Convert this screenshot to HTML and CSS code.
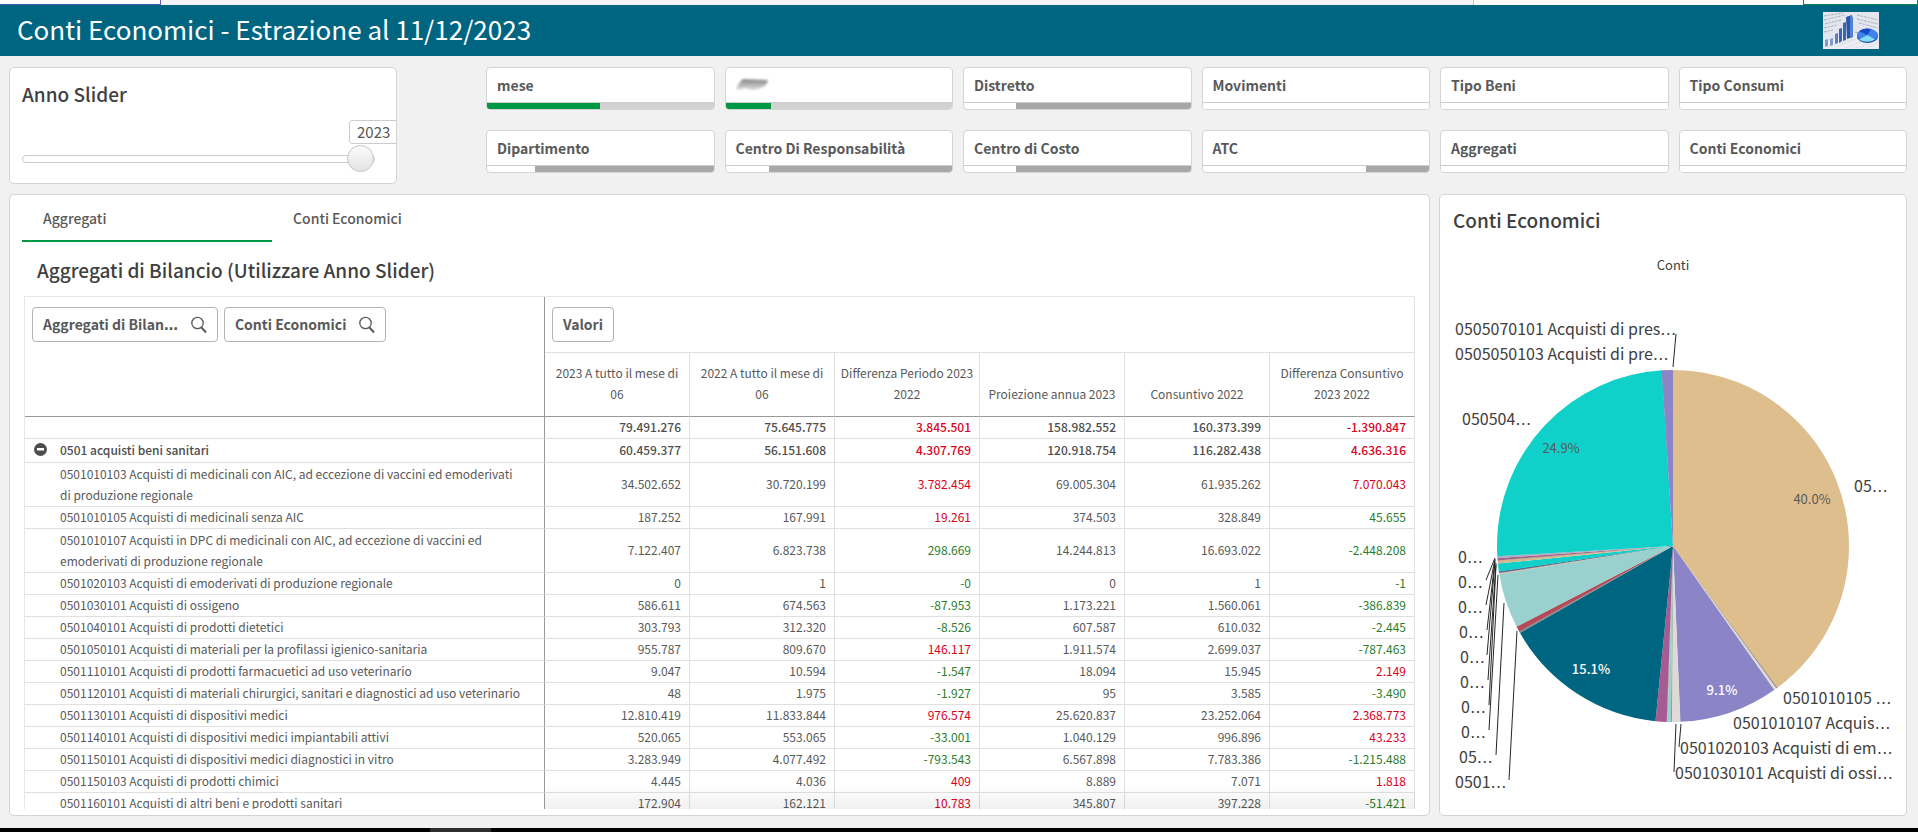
FILE: index.html
```
<!DOCTYPE html>
<html lang="it">
<head>
<meta charset="utf-8">
<title>Conti Economici</title>
<link rel="stylesheet" href="styles.css">
</head>
<body>
<div class="window-edge"><span class="edge-tab"></span><span class="edge-mid"></span><span class="edge-pane"></span><span class="edge-active"></span></div>
<header class="header">
  <h1 class="header-title">Conti Economici - Estrazione al 11/12/2023</h1>
  <svg class="header-picture" viewBox="0 0 56 37" aria-hidden="true">
    <rect width="56" height="37" fill="#e3e6ee"/>
    <g stroke="#a9afc0" stroke-width="1" stroke-dasharray="3 1 2 1" fill="none">
      <path d="M1 4L20 1M1 8L22 3M2 12L18 8M34 3L55 8M34 7L55 12M36 11L55 16M1 16L14 13M1 20L10 18M32 20L37 21"/>
      <path d="M14 35L36 26M22 36L40 29M32 36L46 32M4 36L30 27M46 35L55 31"/>
    </g>
    <path d="M0 30L34 22L56 30V37H0Z" fill="#f4f5f9" opacity=".6"/>
    <path d="M2 28l3-1v7l-3 1zM7 27l3-1v7l-3 1z" fill="#7f9bc9"/>
    <path d="M12 22l3-1v10l-3 1z" fill="#5b7fbd"/>
    <path d="M16 17l3-1v13l-3 2zM20 11l3-1v18l-3 1z" fill="#3c66b0"/>
    <path d="M23 5l6-2 1 22-6 2z" fill="#2b55a5"/>
    <path d="M27 4l3 1v20l-3 1z" fill="#4f83d8"/>
    <ellipse cx="44.500" cy="24.500" rx="10.500" ry="6.500" fill="#1f49a8"/>
    <ellipse cx="44.500" cy="23" rx="10.500" ry="6.500" fill="#3f82ec"/>
    <path d="M44.500 23L36 19.200A10.500 6.500 0 0 1 48 17Z" fill="#1648c8"/>
    <path d="M44.500 23L52 27.600A10.500 6.500 0 0 1 36 27.500Z" fill="#86dcf8"/>
  </svg>
</header>

<main class="sheet">
  <section class="controls">
    <div class="card slider-card">
      <label class="card-title" for="anno">Anno Slider</label>
      <output class="slider-value" for="anno">2023</output>
      <input class="slider" id="anno" type="range" min="2019" max="2023" value="2023">
    </div>
    <div class="filters">
      <button class="filter"><span class="filter-label">mese</span><span class="bar bar-rest"><span class="bar-selected" style="width:50%"></span></span></button>
      <button class="filter" aria-label="Filtro"><span class="filter-label"><svg class="smudge" viewBox="0 0 34 16" aria-hidden="true"><defs><linearGradient id="smudge" x1="0" y1="0" x2="0" y2="1"><stop offset="0" stop-color="#858585"/><stop offset="1" stop-color="#e0e0e0"/></linearGradient><filter id="soft"><feGaussianBlur stdDeviation="1"/></filter></defs><path d="M7 2L32 3Q31 9 25 11Q16 15 10 11Q4 13 0 13Q2 6 7 2Z" fill="url(#smudge)" filter="url(#soft)"/></svg></span><span class="bar bar-rest"><span class="bar-selected" style="width:20%"></span></span></button>
      <button class="filter"><span class="filter-label">Distretto</span><span class="bar bar-excluded"><span class="bar-possible" style="width:23%"></span></span></button>
      <button class="filter"><span class="filter-label">Movimenti</span><span class="bar"></span></button>
      <button class="filter"><span class="filter-label">Tipo Beni</span><span class="bar"></span></button>
      <button class="filter"><span class="filter-label">Tipo Consumi</span><span class="bar"></span></button>
      <button class="filter"><span class="filter-label">Dipartimento</span><span class="bar bar-excluded"><span class="bar-possible" style="width:21%"></span></span></button>
      <button class="filter"><span class="filter-label">Centro Di Responsabilità</span><span class="bar bar-excluded"><span class="bar-possible" style="width:19%"></span></span></button>
      <button class="filter"><span class="filter-label">Centro di Costo</span><span class="bar bar-excluded"><span class="bar-possible" style="width:23%"></span></span></button>
      <button class="filter"><span class="filter-label">ATC</span><span class="bar bar-excluded"><span class="bar-possible" style="width:72%"></span></span></button>
      <button class="filter"><span class="filter-label">Aggregati</span><span class="bar"></span></button>
      <button class="filter"><span class="filter-label">Conti Economici</span><span class="bar"></span></button>
    </div>
  </section>

  <section class="panels">
    <div class="card pivot-card">
      <nav class="tabs">
        <button class="tab tab-active">Aggregati</button>
        <button class="tab">Conti Economici</button>
      </nav>
      <h2 class="card-title pivot-title">Aggregati di Bilancio (Utilizzare Anno Slider)</h2>
      <div class="pivot-view">
        <table class="pivot">
          <colgroup><col class="col-name"><col><col><col><col><col><col></colgroup>
          <thead>
            <tr>
              <th class="dims" rowspan="2">
                <div class="chips">
                  <button class="chip"><span>Aggregati di Bilan<span class="dots">…</span></span><svg class="lens" viewBox="0 0 16 18" aria-hidden="true"><circle cx="6.500" cy="7" r="5.700"/><path d="M10.500 11.500L15 16.500" stroke-width="2"/></svg></button>
                  <button class="chip">Conti Economici<svg class="lens" viewBox="0 0 16 18" aria-hidden="true"><circle cx="6.500" cy="7" r="5.700"/><path d="M10.500 11.500L15 16.500" stroke-width="2"/></svg></button>
                </div>
              </th>
              <th class="measures" colspan="6"><div class="chips"><button class="chip">Valori</button></div></th>
            </tr>
            <tr class="heads"><th>2023 A tutto il mese di 06</th><th>2022 A tutto il mese di 06</th><th>Differenza Periodo 2023 2022</th><th>Proiezione annua 2023</th><th>Consuntivo 2022</th><th>Differenza Consuntivo 2023 2022</th></tr>
          </thead>
          <tbody>
            <tr class="total"><td></td><td>79.491.276</td><td>75.645.775</td><td class="up">3.845.501</td><td>158.982.552</td><td>160.373.399</td><td class="up">-1.390.847</td></tr>
            <tr class="total group"><td><div class="group-name"><button class="collapse" aria-label="Comprimi"><svg viewBox="0 0 13 13" aria-hidden="true"><circle cx="6.500" cy="6.500" r="6.500" fill="#4d4d4d"/><rect x="3" y="5" width="7" height="2.500" fill="#fff"/></svg></button>0501 acquisti beni sanitari</div></td><td>60.459.377</td><td>56.151.608</td><td class="up">4.307.769</td><td>120.918.754</td><td>116.282.438</td><td class="up">4.636.316</td></tr>
            <tr class="tall"><td>0501010103 Acquisti di medicinali con AIC, ad eccezione di vaccini ed emoderivati di produzione regionale</td><td>34.502.652</td><td>30.720.199</td><td class="up">3.782.454</td><td>69.005.304</td><td>61.935.262</td><td class="up">7.070.043</td></tr>
            <tr><td>0501010105 Acquisti di medicinali senza AIC</td><td>187.252</td><td>167.991</td><td class="up">19.261</td><td>374.503</td><td>328.849</td><td class="down">45.655</td></tr>
            <tr class="tall"><td>0501010107 Acquisti in DPC di medicinali con AIC, ad eccezione di vaccini ed emoderivati di produzione regionale</td><td>7.122.407</td><td>6.823.738</td><td class="down">298.669</td><td>14.244.813</td><td>16.693.022</td><td class="down">-2.448.208</td></tr>
            <tr><td>0501020103 Acquisti di emoderivati di produzione regionale</td><td>0</td><td>1</td><td class="down">-0</td><td>0</td><td>1</td><td class="down">-1</td></tr>
            <tr><td>0501030101 Acquisti di ossigeno</td><td>586.611</td><td>674.563</td><td class="down">-87.953</td><td>1.173.221</td><td>1.560.061</td><td class="down">-386.839</td></tr>
            <tr><td>0501040101 Acquisti di prodotti dietetici</td><td>303.793</td><td>312.320</td><td class="down">-8.526</td><td>607.587</td><td>610.032</td><td class="down">-2.445</td></tr>
            <tr><td>0501050101 Acquisti di materiali per la profilassi igienico-sanitaria</td><td>955.787</td><td>809.670</td><td class="up">146.117</td><td>1.911.574</td><td>2.699.037</td><td class="down">-787.463</td></tr>
            <tr><td>0501110101 Acquisti di prodotti farmacuetici ad uso veterinario</td><td>9.047</td><td>10.594</td><td class="down">-1.547</td><td>18.094</td><td>15.945</td><td class="up">2.149</td></tr>
            <tr><td>0501120101 Acquisti di materiali chirurgici, sanitari e diagnostici ad uso veterinario</td><td>48</td><td>1.975</td><td class="down">-1.927</td><td>95</td><td>3.585</td><td class="down">-3.490</td></tr>
            <tr><td>0501130101 Acquisti di dispositivi medici</td><td>12.810.419</td><td>11.833.844</td><td class="up">976.574</td><td>25.620.837</td><td>23.252.064</td><td class="up">2.368.773</td></tr>
            <tr><td>0501140101 Acquisti di dispositivi medici impiantabili attivi</td><td>520.065</td><td>553.065</td><td class="down">-33.001</td><td>1.040.129</td><td>996.896</td><td class="up">43.233</td></tr>
            <tr><td>0501150101 Acquisti di dispositivi medici diagnostici in vitro</td><td>3.283.949</td><td>4.077.492</td><td class="down">-793.543</td><td>6.567.898</td><td>7.783.386</td><td class="down">-1.215.488</td></tr>
            <tr><td>0501150103 Acquisti di prodotti chimici</td><td>4.445</td><td>4.036</td><td class="up">409</td><td>8.889</td><td>7.071</td><td class="up">1.818</td></tr>
            <tr><td>0501160101 Acquisti di altri beni e prodotti sanitari</td><td>172.904</td><td>162.121</td><td class="up">10.783</td><td>345.807</td><td>397.228</td><td class="down">-51.421</td></tr>
          </tbody>
        </table>
      </div>
    </div>

    <div class="card pie-card">
      <h2 class="card-title">Conti Economici</h2>
      <p class="legend-title">Conti</p>
      <svg class="pie" viewBox="0 0 466 530" role="img" aria-label="Conti Economici">
        <g transform="translate(233 261)">
          <g class="slices" transform="rotate(-90)">
            <circle r="88" pathLength="360" stroke="#dfbe8e" stroke-dasharray="143.7 360" stroke-dashoffset="0"/>
            <circle r="88" pathLength="360" stroke="#8e8f8c" stroke-dasharray=".5 360" stroke-dashoffset="-143.6"/>
            <circle r="88" pathLength="360" stroke="#e0dad8" stroke-dasharray="1 360" stroke-dashoffset="-144"/>
            <circle r="88" pathLength="360" stroke="#8b84c7" stroke-dasharray="32.700 360" stroke-dashoffset="-144.900"/>
            <circle r="88" pathLength="360" stroke="#e0dad6" stroke-dasharray="2.900 360" stroke-dashoffset="-177.500"/>
            <circle r="88" pathLength="360" stroke="#7f9e9e" stroke-dasharray=".5 360" stroke-dashoffset="-180.300"/>
            <circle r="88" pathLength="360" stroke="#9ad1cf" stroke-dasharray="1.200 360" stroke-dashoffset="-180.700"/>
            <circle r="88" pathLength="360" stroke="#c3ada6" stroke-dasharray=".4 360" stroke-dashoffset="-181.800"/>
            <circle r="88" pathLength="360" stroke="#a65c92" stroke-dasharray="3.700 360" stroke-dashoffset="-182.100"/>
            <circle r="88" pathLength="360" stroke="#006580" stroke-dasharray="54.600 360" stroke-dashoffset="-185.800"/>
            <circle r="88" pathLength="360" stroke="#8c8c92" stroke-dasharray=".7 360" stroke-dashoffset="-240.300"/>
            <circle r="88" pathLength="360" stroke="#b34a57" stroke-dasharray="1.800 360" stroke-dashoffset="-240.900"/>
            <circle r="88" pathLength="360" stroke="#9ad1cf" stroke-dasharray="18.200 360" stroke-dashoffset="-242.600"/>
            <circle r="88" pathLength="360" stroke="#d8c3a2" stroke-dasharray=".5 360" stroke-dashoffset="-260.700"/>
            <circle r="88" pathLength="360" stroke="#5c6b90" stroke-dasharray=".6 360" stroke-dashoffset="-261.100"/>
            <circle r="88" pathLength="360" stroke="#10d0ca" stroke-dasharray="2.600 360" stroke-dashoffset="-261.600"/>
            <circle r="88" pathLength="360" stroke="#d3b68e" stroke-dasharray="1.100 360" stroke-dashoffset="-264.200"/>
            <circle r="88" pathLength="360" stroke="#a0648f" stroke-dasharray=".8 360" stroke-dashoffset="-265.200"/>
            <circle r="88" pathLength="360" stroke="#b9adc4" stroke-dasharray=".8 360" stroke-dashoffset="-265.900"/>
            <circle r="88" pathLength="360" stroke="#10d0ca" stroke-dasharray="89.700 360" stroke-dashoffset="-266.600"/>
            <circle r="88" pathLength="360" stroke="#8b84c7" stroke-dasharray="3.800 360" stroke-dashoffset="-356.200"/>
          </g>
          <path class="leaders" d="M3-212L0-179M-187 34L-178 12M-187 59L-178 13M-186 84L-178 14M-186 109L-178 16M-185 134L-177 17M-184 159L-177 19M-184 184L-175 29M-177 209L-169 57M-164 234L-156 85M6 201L8 178M1 226L3 178"/>
          <g class="labels">
            <text x="-218" y="-211">0505070101 Acquisti di pres<tspan class="dots">…</tspan></text>
            <text x="-218" y="-186">0505050103 Acquisti di pre<tspan class="dots">…</tspan></text>
            <text x="-211" y="-121">050504<tspan class="dots">…</tspan></text>
            <text x="181" y="-54">05<tspan class="dots">…</tspan></text>
            <text x="-215" y="17">0<tspan class="dots">…</tspan></text>
            <text x="-215" y="42">0<tspan class="dots">…</tspan></text>
            <text x="-215" y="67">0<tspan class="dots">…</tspan></text>
            <text x="-214" y="92">0<tspan class="dots">…</tspan></text>
            <text x="-213" y="117">0<tspan class="dots">…</tspan></text>
            <text x="-213" y="142">0<tspan class="dots">…</tspan></text>
            <text x="-212" y="167">0<tspan class="dots">…</tspan></text>
            <text x="-212" y="192">0<tspan class="dots">…</tspan></text>
            <text x="-214" y="217">05<tspan class="dots">…</tspan></text>
            <text x="-218" y="242">0501<tspan class="dots">…</tspan></text>
            <text x="110" y="158">0501010105 <tspan class="dots">…</tspan></text>
            <text x="60" y="183">0501010107 Acquis<tspan class="dots">…</tspan></text>
            <text x="7" y="208">0501020103 Acquisti di em<tspan class="dots">…</tspan></text>
            <text x="2" y="233">0501030101 Acquisti di ossi<tspan class="dots">…</tspan></text>
          </g>
          <g class="shares">
            <text x="139" y="-42">40.0%</text>
            <text x="-112" y="-93">24.9%</text>
            <text class="share-light" x="-82" y="128">15.1%</text>
            <text class="share-light" x="49" y="149">9.1%</text>
          </g>
        </g>
      </svg>
    </div>
  </section>
</main>
<footer class="taskbar"><span class="taskbar-item"></span></footer>
</body>
</html>
```
FILE: styles.css
```
* { box-sizing: border-box; }

body {
  margin: 0;
  height: 100vh;
  display: flex;
  flex-direction: column;
  background: #f1f1f1;
  color: #595959;
  font-family: "Noto Sans CJK SC", "Noto Sans", sans-serif;
  font-size: 12px;
  line-height: 21px;
  overflow: hidden;
}

button {
  font: inherit;
  color: inherit;
  margin: 0;
  padding: 0;
  border: 0;
  background: none;
}

.dots { font-family: "DejaVu Sans", sans-serif; }

.window-edge { display: flex; height: 5px; background: #f4f4f4; }
.edge-tab { width: 161px; background: #fff; border-right: 1px solid #6a5fb0; border-bottom: 1px solid #3a5fb0; }
.edge-mid { flex: 1; border-right: 1px solid #c4c4c4; }
.edge-pane { width: 329px; background: #fbfbf8; }
.edge-active { width: 115px; background: #fff; border: 1px solid #0b8050; border-top: 0; }

.header {
  display: flex;
  align-items: center;
  justify-content: space-between;
  padding: 7px 39px 7px 17px;
  background: #006580;
}
.header-title { margin: 0; padding-bottom: 3px; color: #fff; font-size: 26px; font-weight: 400; line-height: 34px; }
.header-picture { width: 56px; height: 37px; }

.sheet {
  flex: 1;
  min-height: 0;
  display: flex;
  flex-direction: column;
  gap: 10px;
  padding: 11px 11px 12px 9px;
}

.card { background: #fff; border: 1px solid #d4d4d4; border-radius: 5px; }
.card-title { margin: 0; color: #404040; font-size: 19px; font-weight: 500; line-height: 26px; }

.controls { display: grid; grid-template-columns: 388fr 1421fr; gap: 89px; }

.slider-card {
  position: relative;
  display: flex;
  flex-direction: column;
  gap: 38px;
  padding: 13px 21px 10px 12px;
  overflow: hidden;
}
.slider { appearance: none; width: 100%; height: 28px; margin: 0; background: none; }
.slider::-webkit-slider-runnable-track {
  height: 8px;
  border: 1px solid #ccc;
  border-radius: 4px;
  background: #fff;
}
.slider::-webkit-slider-thumb {
  appearance: none;
  width: 27px;
  height: 27px;
  margin-top: -11px;
  border: 1px solid #c4c4c4;
  border-radius: 50%;
  background: linear-gradient(#fbfbfb, #e4e4e4);
}
.slider-value {
  position: absolute;
  top: 52px;
  right: -6px;
  width: 53px;
  padding-left: 7px;
  border: 1px solid #ccc;
  border-radius: 3px;
  background: #fff;
  font-size: 15px;
  line-height: 22px;
}

.filters { display: grid; grid-template-columns: repeat(6, 1fr); gap: 20px 10px; align-content: start; }
.filter {
  display: flex;
  flex-direction: column;
  border: 1px solid #d4d4d4;
  border-radius: 4px;
  background: #fff;
  overflow: hidden;
  text-align: left;
}
.filter-label { height: 34px; padding-left: 10px; font-size: 14px; font-weight: 700; line-height: 34px; }
.smudge { display: block; width: 34px; height: 34px; }
.bar { display: flex; width: 100%; height: 7px; border-top: 1px solid #ccc; background: #fff; }
.bar-rest { background: #d2d2d2; }
.bar-excluded { background: #a8a8a8; }
.bar-selected { background: #009845; }
.bar-possible { background: #fff; }

.panels { flex: 1; min-height: 0; display: grid; grid-template-columns: 1421fr 468fr; grid-template-rows: minmax(0, 1fr); gap: 9px; }

.pivot-card { display: flex; flex-direction: column; padding: 0 14px 6px 14px; }
.tabs { display: flex; margin-left: -2px; }
.tab {
  width: 250px;
  padding: 12px 0 11px 21px;
  border-bottom: 2px solid transparent;
  font-size: 14px;
  font-weight: 500;
  line-height: 22px;
  text-align: left;
}
.tab-active { border-bottom-color: #009845; }
.pivot-title { padding: 15px 0 13px 13px; }

.pivot-view { position: relative; flex: 1; min-height: 0; overflow: hidden; }
.pivot-view::after {
  content: "";
  position: absolute;
  inset: auto 0 0 521px;
  height: 24px;
  background: linear-gradient(rgba(0, 0, 0, 0), rgba(0, 0, 0, .06));
}

.pivot { width: 100%; table-layout: fixed; border-collapse: separate; border-spacing: 0; border-top: 1px solid #e6e6e6; border-left: 1px solid #e6e6e6; }
.col-name { width: 520px; }
.pivot th, .pivot td { padding: 0; border-bottom: 1px solid #e0e0e0; border-right: 1px solid #e0e0e0; }
.pivot th { font-weight: 400; }
.pivot .dims { vertical-align: top; border-right-color: #999; border-bottom-color: #999; }
.chips { display: flex; gap: 6px; padding: 10px 7px; }
.chip {
  display: flex;
  align-items: center;
  gap: 13px;
  height: 35px;
  padding: 0 10px;
  border: 1px solid #b3b3b3;
  border-radius: 4px;
  background: #fff;
  font-size: 14px;
  font-weight: 700;
}
.lens { width: 16px; height: 18px; fill: none; stroke: #595959; stroke-width: 1.3; }
.pivot .heads th { height: 64px; padding: 0 4px 12px; vertical-align: bottom; border-bottom-color: #999; }

.pivot td { height: 22px; padding-right: 8px; padding-bottom: 2px; line-height: 19px; text-align: right; }
.pivot td:first-child { padding: 0 22px 2px 35px; border-right-color: #999; text-align: left; }
.pivot .tall td { height: 44px; }
.pivot .tall td:first-child { padding-bottom: 1px; line-height: 21px; }
.total { font-weight: 500; color: #4d4d4d; }
.pivot .group td { height: 24px; }
.pivot .group td:first-child { padding-left: 9px; }
.group-name { display: flex; align-items: center; gap: 13px; }
.collapse { display: flex; width: 13px; height: 13px; }
.pivot .up { color: #d9001b; }
.pivot .down { color: #2b7d2b; }

.pie-card { display: flex; flex-direction: column; }
.pie-card .card-title { padding: 12px 13px 0; }
.legend-title { margin: 21px 0 9px; color: #404040; font-size: 13px; line-height: 22px; text-align: center; }
.pie { flex: 1; min-height: 0; width: 100%; }
.slices { fill: none; stroke-width: 176; }
.leaders { fill: none; stroke: #262626; stroke-width: 1; }
.labels { fill: #404040; font-size: 16px; }
.shares { fill: #595959; font-size: 13px; text-anchor: middle; }
.share-light { fill: #fff; font-weight: 500; }

.taskbar { display: flex; height: 4px; padding-left: 430px; background: #000; }
.taskbar-item { width: 61px; background: #2c2c2e; }
```
